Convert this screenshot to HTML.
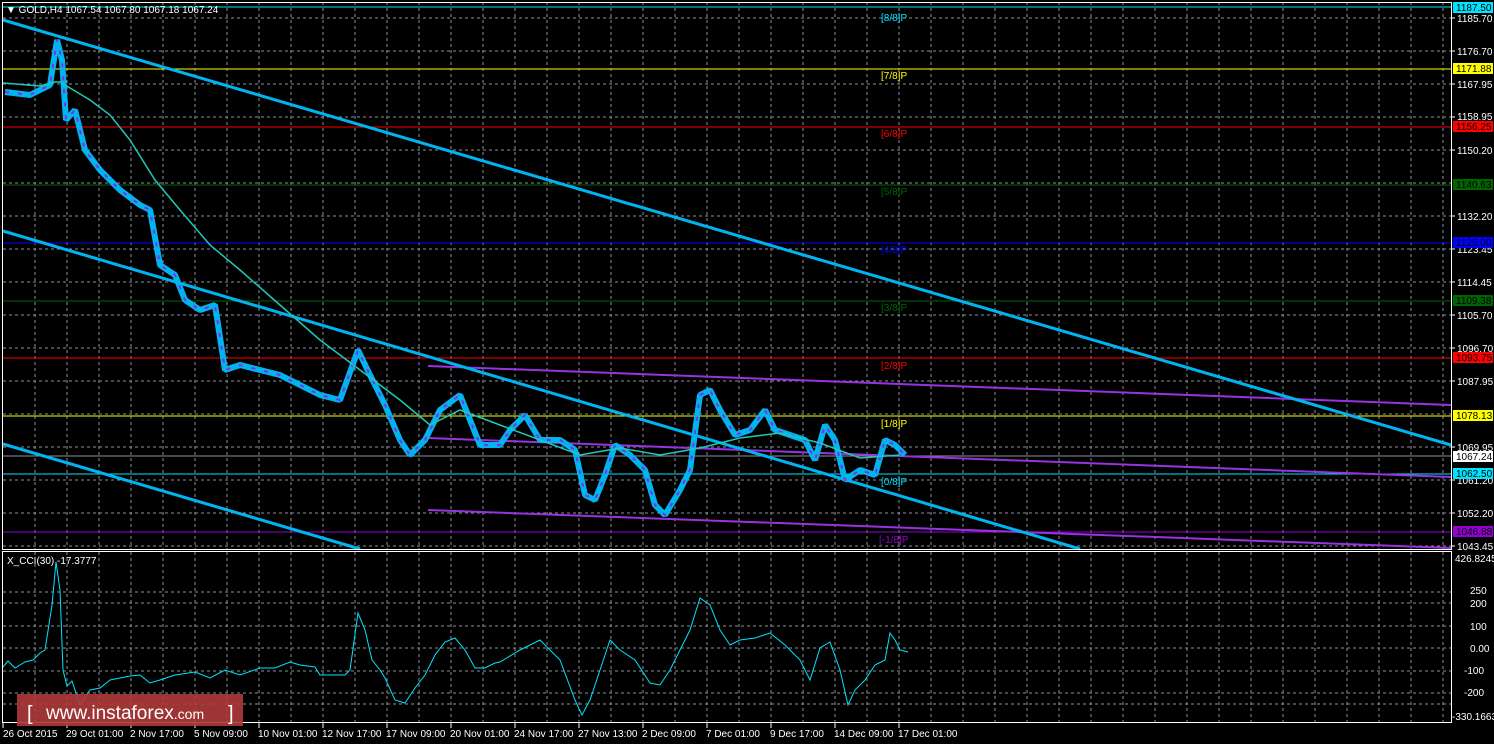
<!DOCTYPE html>
<html><head><meta charset="utf-8"><style>
html,body{margin:0;padding:0;background:#000;width:1494px;height:744px;overflow:hidden}
svg{display:block}
text{font-family:"Liberation Sans",sans-serif}
</style></head><body>
<svg width="1494" height="744" viewBox="0 0 1494 744" xmlns="http://www.w3.org/2000/svg">
<rect width="1494" height="744" fill="#000"/>
<g stroke="#8a8f99" stroke-width="1" stroke-dasharray="3,3">
<path d="M35 2V549M67 2V549M99 2V549M131 2V549M163 2V549M195 2V549M227 2V549M259 2V549M291 2V549M323 2V549M355 2V549M387 2V549M419 2V549M451 2V549M483 2V549M515 2V549M547 2V549M579 2V549M611 2V549M643 2V549M675 2V549M707 2V549M739 2V549M771 2V549M803 2V549M835 2V549M867 2V549M899 2V549M931 2V549M963 2V549M995 2V549M1027 2V549M1059 2V549M1091 2V549M1123 2V549M1155 2V549M1187 2V549M1219 2V549M1251 2V549M1283 2V549M1315 2V549M1347 2V549M1379 2V549M1411 2V549M1443 2V549"/>
<path d="M35 552V722M67 552V722M99 552V722M131 552V722M163 552V722M195 552V722M227 552V722M259 552V722M291 552V722M323 552V722M355 552V722M387 552V722M419 552V722M451 552V722M483 552V722M515 552V722M547 552V722M579 552V722M611 552V722M643 552V722M675 552V722M707 552V722M739 552V722M771 552V722M803 552V722M835 552V722M867 552V722M899 552V722M931 552V722M963 552V722M995 552V722M1027 552V722M1059 552V722M1091 552V722M1123 552V722M1155 552V722M1187 552V722M1219 552V722M1251 552V722M1283 552V722M1315 552V722M1347 552V722M1379 552V722M1411 552V722M1443 552V722"/>
<path d="M3 18H1451M3 51H1451M3 84H1451M3 117H1451M3 150H1451M3 183H1451M3 216H1451M3 249H1451M3 282H1451M3 315H1451M3 348H1451M3 381H1451M3 414H1451M3 447H1451M3 480H1451M3 513H1451M3 546H1451"/>
<path d="M3 592H1451M3 603H1451M3 626H1451M3 648H1451M3 671H1451M3 693H1451M3 704H1451"/>
</g>
<!-- murrey lines -->
<g stroke-width="1">
<line x1="3" y1="7" x2="1451" y2="7" stroke="#00e5ff"/>
<line x1="3" y1="69" x2="1451" y2="69" stroke="#ffff00"/>
<line x1="3" y1="127" x2="1451" y2="127" stroke="#ff0000"/>
<line x1="3" y1="185" x2="1451" y2="185" stroke="#006400"/>
<line x1="3" y1="243" x2="1451" y2="243" stroke="#0000ff"/>
<line x1="3" y1="301" x2="1451" y2="301" stroke="#006400"/>
<line x1="3" y1="358" x2="1451" y2="358" stroke="#ff0000"/>
<line x1="3" y1="416" x2="1451" y2="416" stroke="#ffff00"/>
<line x1="3" y1="474" x2="1451" y2="474" stroke="#00e5ff"/>
<line x1="3" y1="532" x2="1451" y2="532" stroke="#9400d3"/>
<line x1="3" y1="456" x2="1451" y2="456" stroke="#8a8f99"/>
</g>
<!-- purple channel -->
<g stroke="#9932e0" stroke-width="2" fill="none">
<line x1="428" y1="366" x2="1451" y2="405"/>
<line x1="428" y1="438" x2="1451" y2="477"/>
<line x1="428" y1="510" x2="1451" y2="548"/>
</g>
<!-- cyan trend lines -->
<g stroke="#00b4f0" stroke-width="3" fill="none">
<line x1="3" y1="20" x2="1451" y2="445"/>
<line x1="3" y1="231" x2="1080" y2="549"/>
<line x1="3" y1="444" x2="360" y2="549"/>
</g>
<!-- price -->
<polyline fill="none" stroke="#00b4f0" stroke-width="6" stroke-linejoin="bevel" points="5,92 30,95 50,85 57,40 62,60 66,120 75,110 85,150 100,170 120,190 140,205 150,210 160,265 175,275 185,300 200,310 215,305 225,370 240,365 260,370 280,375 300,385 320,395 340,400 358,350 370,375 385,405 400,440 410,455 425,440 440,410 460,395 470,420 480,445 500,445 510,430 525,415 540,440 560,440 575,450 585,495 595,500 605,475 615,445 630,455 645,470 655,505 665,515 680,490 690,470 700,395 710,390 720,410 735,435 750,430 765,410 775,430 790,435 805,440 815,460 825,425 835,440 845,480 860,470 875,475 885,440 895,445 905,455"/>
<polyline fill="none" stroke="#8a2be2" stroke-width="2" stroke-dasharray="4,9" points="5,92 30,95 50,85 57,40 62,60 66,120 75,110 85,150 100,170 120,190 140,205 150,210 160,265 175,275 185,300 200,310 215,305 225,370 240,365 260,370 280,375 300,385 320,395 340,400 358,350 370,375 385,405 400,440 410,455 425,440 440,410 460,395 470,420 480,445 500,445 510,430 525,415 540,440 560,440 575,450 585,495 595,500 605,475 615,445 630,455 645,470 655,505 665,515 680,490 690,470 700,395 710,390 720,410 735,435 750,430 765,410 775,430 790,435 805,440 815,460 825,425 835,440 845,480 860,470 875,475 885,440 895,445 905,455"/>
<polyline fill="none" stroke="#20c8b8" stroke-width="1.5" points="3,83 40,86 55,82 60,82 70,88 90,100 110,115 130,140 155,180 180,210 210,245 240,270 280,305 320,340 360,370 400,400 430,425 460,410 500,425 540,440 580,455 620,448 660,455 700,448 740,438 780,433 820,443 860,458 900,455"/>
<!-- CCI -->
<polyline fill="none" stroke="#00e5ff" stroke-width="1" points="3,667 8,661 15,668 25,662 33,660 40,653 45,650 52,605 56,562 60,590 63,670 67,686 72,681 80,705 90,690 100,688 110,680 120,678 130,676 140,675 150,683 160,680 175,675 195,672 210,678 225,670 240,675 260,668 275,668 290,662 300,665 315,667 320,675 330,675 345,675 350,670 358,613 365,630 372,660 380,670 385,678 395,700 405,703 415,688 425,675 435,655 445,642 455,638 465,650 475,668 485,668 495,663 500,662 520,650 540,640 560,660 575,700 582,715 590,700 600,670 610,640 620,650 635,660 650,683 660,685 670,670 680,650 690,630 700,598 710,605 720,630 730,645 740,640 755,638 770,633 785,645 800,660 810,680 820,648 830,642 840,670 848,705 855,690 865,680 875,665 885,660 890,633 895,640 900,650 908,652"/>
<!-- frames -->
<rect x="2.5" y="2.5" width="1449" height="547" fill="none" stroke="#fff"/>
<rect x="2.5" y="551.5" width="1449" height="171" fill="none" stroke="#fff"/>
<!-- murrey labels -->
<g font-size="10">
<text x="881" y="21" fill="#00e5ff">[8/8]P</text>
<text x="881" y="79" fill="#ffff00">[7/8]P</text>
<text x="881" y="137" fill="#ff0000">[6/8]P</text>
<text x="881" y="195" fill="#006400">[5/8]P</text>
<text x="881" y="253" fill="#0000ff">[4/8]P</text>
<text x="881" y="311" fill="#006400">[3/8]P</text>
<text x="881" y="369" fill="#ff0000">[2/8]P</text>
<text x="881" y="427" fill="#ffff00">[1/8]P</text>
<text x="881" y="485" fill="#00e5ff">[0/8]P</text>
<text x="879" y="543" fill="#9400d3">[-1/8]P</text>
</g>
<text x="6" y="13" fill="#fff" font-size="10">▼ GOLD,H4  1067.54 1067.80 1067.18 1067.24</text>
<text x="7" y="564" fill="#fff" font-size="10">X_CCI(30) -17.3777</text>
<!-- right axis -->
<g font-size="10" fill="#fff">
<path d="M1451 18h4M1451 51h4M1451 84h4M1451 117h4M1451 150h4M1451 216h4M1451 249h4M1451 282h4M1451 315h4M1451 348h4M1451 381h4M1451 447h4M1451 480h4M1451 513h4M1451 546h4" stroke="#fff"/>
<text x="1457" y="22">1185.70</text><text x="1457" y="55">1176.70</text><text x="1457" y="88">1167.95</text><text x="1457" y="120">1158.95</text><text x="1457" y="154">1150.20</text><text x="1457" y="220">1132.20</text><text x="1457" y="253">1123.45</text><text x="1457" y="286">1114.45</text><text x="1457" y="319">1105.70</text><text x="1457" y="352">1096.70</text><text x="1457" y="385">1087.95</text><text x="1457" y="451">1069.95</text><text x="1457" y="484">1061.20</text><text x="1457" y="517">1052.20</text><text x="1457" y="550">1043.45</text>
<text x="1455" y="562">426.8245</text><text x="1470" y="594">250</text><text x="1470" y="607">200</text><text x="1470" y="630">100</text><text x="1470" y="652">0.00</text><text x="1464" y="674">-100</text><text x="1464" y="696">-200</text><text x="1452" y="720">-330.1663</text>
</g>
<g font-size="10">
<rect x="1453" y="2" width="40" height="11" fill="#00e5ff"/><text x="1456" y="11" fill="#000">1187.50</text>
<rect x="1453" y="63" width="40" height="11" fill="#ffff00"/><text x="1456" y="72" fill="#000">1171.88</text>
<rect x="1453" y="121" width="40" height="11" fill="#ff0000"/><text x="1456" y="130" fill="#000">1156.25</text>
<rect x="1453" y="179" width="40" height="11" fill="#006400"/><text x="1456" y="188" fill="#000">1140.63</text>
<rect x="1453" y="237" width="40" height="11" fill="#0000ff"/><text x="1456" y="246" fill="#000">1125.00</text>
<rect x="1453" y="295" width="40" height="11" fill="#006400"/><text x="1456" y="304" fill="#000">1109.38</text>
<rect x="1453" y="352" width="40" height="11" fill="#ff0000"/><text x="1456" y="361" fill="#000">1093.75</text>
<rect x="1453" y="410" width="40" height="11" fill="#ffff00"/><text x="1456" y="419" fill="#000">1078.13</text>
<rect x="1453" y="451" width="40" height="11" fill="#fff"/><text x="1456" y="460" fill="#000">1067.24</text>
<rect x="1453" y="468" width="40" height="11" fill="#00e5ff"/><text x="1456" y="477" fill="#000">1062.50</text>
<rect x="1453" y="526" width="40" height="11" fill="#9400d3"/><text x="1456" y="535" fill="#000">1046.88</text>
</g>
<!-- time axis -->
<path d="M3 723v5M67 723v5M131 723v5M195 723v5M259 723v5M323 723v5M387 723v5M451 723v5M515 723v5M579 723v5M643 723v5M707 723v5M771 723v5M835 723v5M899 723v5" stroke="#fff"/>
<g font-size="10" fill="#fff">
<text x="3" y="737">26 Oct 2015</text><text x="66" y="737">29 Oct 01:00</text><text x="130" y="737">2 Nov 17:00</text><text x="194" y="737">5 Nov 09:00</text><text x="258" y="737">10 Nov 01:00</text><text x="322" y="737">12 Nov 17:00</text><text x="386" y="737">17 Nov 09:00</text><text x="450" y="737">20 Nov 01:00</text><text x="514" y="737">24 Nov 17:00</text><text x="578" y="737">27 Nov 13:00</text><text x="642" y="737">2 Dec 09:00</text><text x="706" y="737">7 Dec 01:00</text><text x="770" y="737">9 Dec 17:00</text><text x="834" y="737">14 Dec 09:00</text><text x="898" y="737">17 Dec 01:00</text>
</g>
<!-- watermark -->
<rect x="17" y="694" width="226" height="32" fill="#b03a3a" fill-opacity="0.9"/>
<text x="27" y="720" fill="#fff" font-size="20">[</text>
<text x="46" y="719" fill="#fff" font-size="19">www.instaforex<tspan font-size="14">.com</tspan></text>
<text x="228" y="720" fill="#fff" font-size="20">]</text>
</svg>
</body></html>
